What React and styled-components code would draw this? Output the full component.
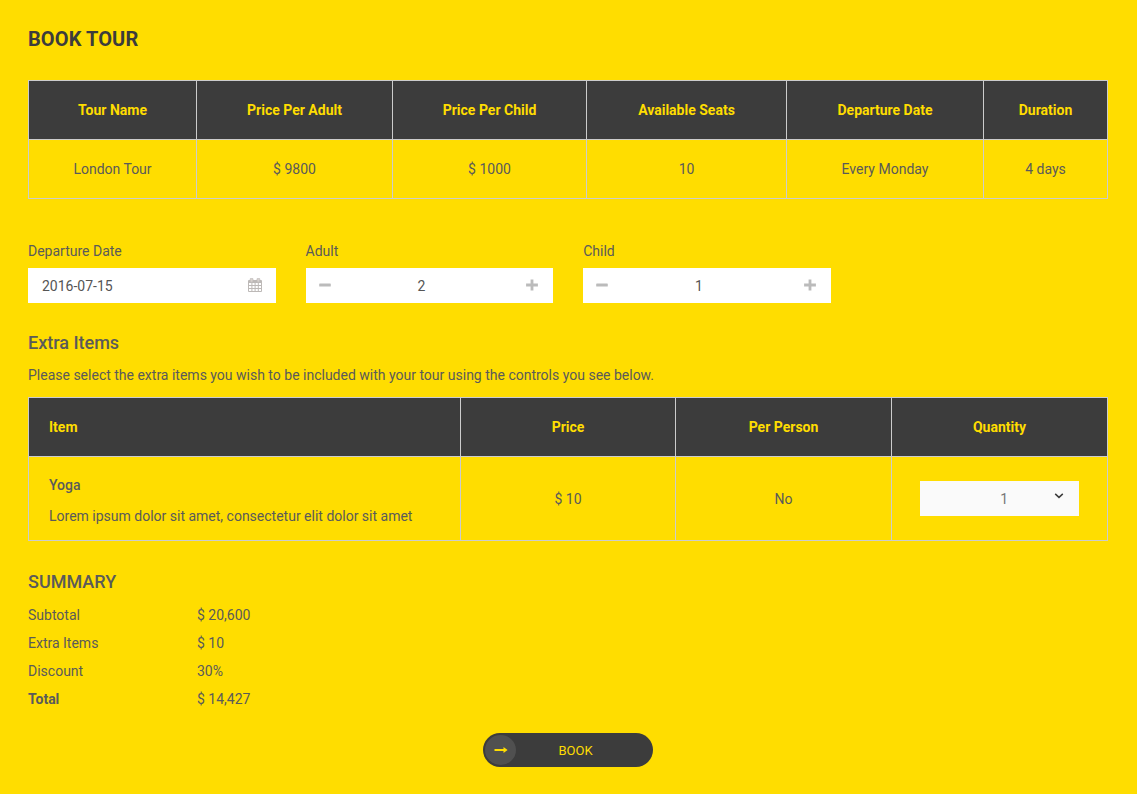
import React from "react";
import styled, { createGlobalStyle } from "styled-components";

const yellow = "#ffdd00";
const dark = "#3c3c3c";
const line = "#cccccc";
const text = "#5a5a5a";

const GlobalStyle = createGlobalStyle`
  *, *::before, *::after { box-sizing: border-box; }
  body {
    margin: 0;
    background: ${yellow};
    color: ${text};
    font: 14px/20px Roboto, "Liberation Sans", sans-serif;
  }
`;

const Page = styled.main`
  width: 1137px;
  height: 794px;
  padding: 27px 29px 0 28px;
  display: flex;
  flex-direction: column;
  overflow: hidden;
`;

const Title = styled.h1`
  margin: 0 0 29px;
  font-size: 20px;
  line-height: 24px;
  font-weight: 700;
  letter-spacing: 0.1px;
  color: ${dark};
`;

const Subtitle = styled.h2`
  margin: 0;
  font-size: 18px;
  line-height: 22px;
  font-weight: 500;
`;

const SummaryTitle = styled(Subtitle)`
  margin-top: 30px;
`;

const Intro = styled.p`
  margin: 11px 0 12px;
`;

const Table = styled.div`
  display: grid;
  flex-shrink: 0;
  grid-template-columns: ${(p) => p.$columns};
  grid-template-rows: 59px ${(p) => p.$body}px;
  border: solid ${line};
  border-width: 0 1px 1px 0;
`;

const Cell = styled.div`
  display: flex;
  flex-direction: column;
  justify-content: center;
  align-items: ${(p) => (p.$left ? "flex-start" : "center")};
  padding: ${(p) => (p.$left ? "0 20px" : "0")};
  border: solid ${line};
  border-width: 1px 0 0 1px;
`;

const HeadCell = styled(Cell)`
  background: ${dark};
  color: ${yellow};
  font-weight: 700;
`;

const ItemCell = styled(Cell)`
  padding-top: 4px;
`;

const ItemName = styled.strong`
  font-weight: 500;
  margin-bottom: 11px;
`;

const Fields = styled.div`
  display: grid;
  grid-template-columns: repeat(3, 247.6px);
  gap: 30px;
  margin: 42px 0 29px;
`;

const Field = styled.div`
  display: flex;
  flex-direction: column;
  gap: 7px;
`;

const Control = styled.div`
  display: flex;
  align-items: center;
  justify-content: space-between;
  height: 35px;
  padding: 1px ${(p) => (p.$stepper ? 13 : 14)}px 0 ${(p) => (p.$stepper ? 13 : 14)}px;
  background: #fff;
  color: #555;
  svg { margin-top: -2px; }
`;

const Stepped = styled.span`
  width: 24px;
  text-align: center;
  margin-right: 12px;
`;

const Select = styled.div`
  display: flex;
  align-items: center;
  justify-content: flex-end;
  gap: 46px;
  width: 159px;
  height: 35px;
  padding: 1px 15px 0 0;
  background: #fafafa;
  color: #777;
  svg { margin-top: -6px; }
`;

const Summary = styled.dl`
  display: grid;
  grid-template-columns: 169px 1fr;
  grid-auto-rows: 28px;
  align-items: center;
  margin: 8px 0 20px;
`;

const Term = styled.dt`
  font-weight: ${(p) => (p.$strong ? 700 : 400)};
`;

const Amount = styled.dd`
  margin: 0;
`;

const BookButton = styled.button`
  display: flex;
  align-items: center;
  align-self: center;
  width: 170px;
  height: 34px;
  flex-shrink: 0;
  margin-right: 1px;
  padding: 0 2px;
  border: 0;
  border-radius: 17px;
  background: ${dark};
  color: ${yellow};
  font: 13px/20px Roboto, "Liberation Sans", sans-serif;
`;

const ArrowDisc = styled.span`
  display: grid;
  place-items: center;
  width: 31px;
  height: 30px;
  padding-left: 1px;
  border-radius: 50%;
  background: #505050;
`;

const ButtonText = styled.span`
  flex: 1;
  padding: 1px 15px 0 0;
`;

const CalendarIcon = () => (
  <svg width="14" height="14" viewBox="0 0 14 14">
    <rect y="2" width="14" height="12" rx="1" fill="#bdb9b7" />
    <path
      fill="#fff"
      d="M1 5h2.4v2H1zM4.4 5h2.2v2H4.4zM7.6 5h2.2v2H7.6zM10.8 5H13v2h-2.2zM1 8h2.4v2H1zM4.4 8h2.2v2H4.4zM7.6 8h2.2v2H7.6zM10.8 8H13v2h-2.2zM1 11h2.4v2H1zM4.4 11h2.2v2H4.4zM7.6 11h2.2v2H7.6zM10.8 11H13v2h-2.2z"
    />
    <rect x="2.2" y="0.2" width="2.8" height="4" rx="0.9" fill="#d8d2ce" stroke="#bdb9b7" strokeWidth="0.7" />
    <rect x="9" y="0.2" width="2.8" height="4" rx="0.9" fill="#d8d2ce" stroke="#bdb9b7" strokeWidth="0.7" />
  </svg>
);

const MinusIcon = () => (
  <svg width="12" height="12" viewBox="0 0 12 12" fill="#bbb">
    <rect x="0.2" y="4.5" width="11.6" height="3" rx="0.6" />
  </svg>
);

const PlusIcon = () => (
  <svg width="16" height="12" viewBox="0 0 16 12" fill="#bbb">
    <path d="M6.6 0.5h2.8v4h4.5v3H9.4v4H6.6v-4H2.1v-3h4.5z" />
  </svg>
);

const ChevronIcon = () => (
  <svg width="10" height="8" viewBox="0 0 10 8" fill="none" stroke="#3c3c3c" strokeWidth="1.5">
    <path d="M1.2 1.9 5 5.4 8.8 1.9" />
  </svg>
);

const ArrowIcon = () => (
  <svg width="14" height="8" viewBox="0 0 14 8" fill={yellow}>
    <path d="M0.5 3.1h9V0.9L13.6 4 9.5 7.1V4.9h-9z" />
  </svg>
);

const tour = [
  ["Tour Name", "London Tour"],
  ["Price Per Adult", "$ 9800"],
  ["Price Per Child", "$ 1000"],
  ["Available Seats", "10"],
  ["Departure Date", "Every Monday"],
  ["Duration", "4 days"],
];

const totals = [
  ["Subtotal", "$ 20,600"],
  ["Extra Items", "$ 10"],
  ["Discount", "30%"],
  ["Total", "$ 14,427"],
];

const Stepper = ({ label, value }) => (
  <Field>
    <span>{label}</span>
    <Control $stepper>
      <MinusIcon />
      <Stepped>{value}</Stepped>
      <PlusIcon />
    </Control>
  </Field>
);

export default function App() {
  return (
    <Page>
      <GlobalStyle />
      <Title>BOOK TOUR</Title>

      <Table $columns="168px 196px 194px 200px 197px 124px" $body={59}>
        {tour.map(([name]) => <HeadCell key={name}>{name}</HeadCell>)}
        {tour.map(([name, value]) => <Cell key={name}>{value}</Cell>)}
      </Table>

      <Fields>
        <Field>
          <span>Departure Date</span>
          <Control>
            <span>2016-07-15</span>
            <CalendarIcon />
          </Control>
        </Field>
        <Stepper label="Adult" value="2" />
        <Stepper label="Child" value="1" />
      </Fields>

      <Subtitle>Extra Items</Subtitle>
      <Intro>Please select the extra items you wish to be included with your tour using the controls you see below.</Intro>

      <Table $columns="432px 215px 216px 216px" $body={84}>
        <HeadCell $left>Item</HeadCell>
        <HeadCell>Price</HeadCell>
        <HeadCell>Per Person</HeadCell>
        <HeadCell>Quantity</HeadCell>
        <ItemCell $left>
          <ItemName>Yoga</ItemName>
          <span>Lorem ipsum dolor sit amet, consectetur elit dolor sit amet</span>
        </ItemCell>
        <Cell>$ 10</Cell>
        <Cell>No</Cell>
        <Cell>
          <Select>
            <span>1</span>
            <ChevronIcon />
          </Select>
        </Cell>
      </Table>

      <SummaryTitle>SUMMARY</SummaryTitle>
      <Summary>
        {totals.map(([name, value]) => (
          <React.Fragment key={name}>
            <Term $strong={name === "Total"}>{name}</Term>
            <Amount>{value}</Amount>
          </React.Fragment>
        ))}
      </Summary>

      <BookButton>
        <ArrowDisc><ArrowIcon /></ArrowDisc>
        <ButtonText>BOOK</ButtonText>
      </BookButton>
    </Page>
  );
}
